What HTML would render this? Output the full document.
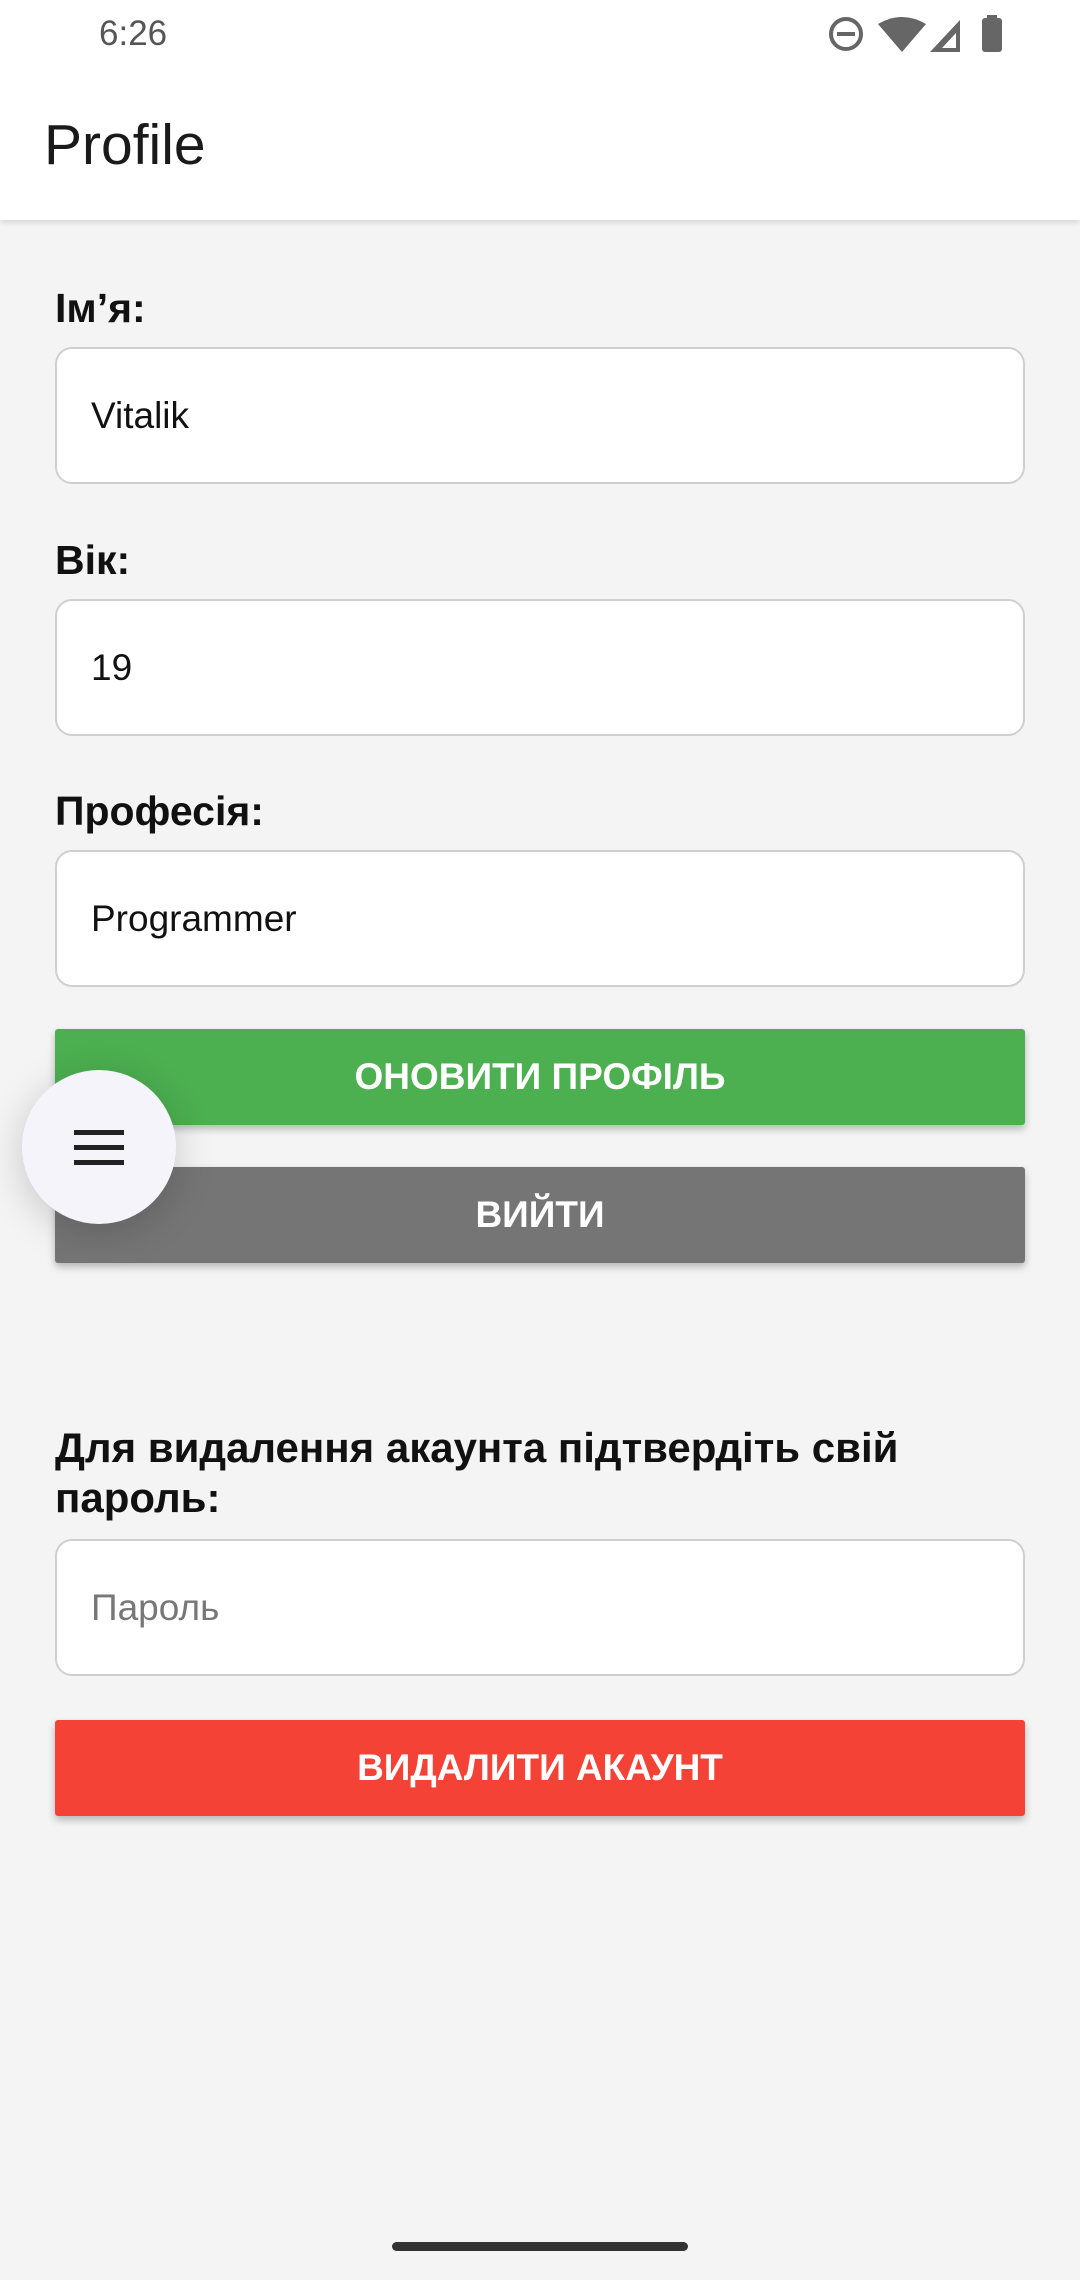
<!DOCTYPE html>
<html><head><meta charset="utf-8"><style>
*{margin:0;padding:0;box-sizing:border-box}
body{width:1080px;height:2280px;background:#f4f4f4;font-family:"Liberation Sans",sans-serif;position:relative;overflow:hidden}
.abs{position:absolute}
.status{top:0;left:0;width:1080px;height:220px;background:#fff;box-shadow:0 2px 6px rgba(0,0,0,.15)}
.lbl{left:55px;font-weight:bold;font-size:41px;color:#111}
.inp{left:55px;width:970px;height:137px;background:#fff;border:2px solid #cfcfcf;border-radius:17px;font-size:37px;color:#111;padding-left:34px;line-height:133px}
.btn{left:55px;width:970px;height:96px;border-radius:3px;color:#fff;font-weight:bold;font-size:37px;text-align:center;line-height:96px;box-shadow:0 4px 8px rgba(0,0,0,.25)}
</style></head><body>
<div class="abs status">
 <div class="abs" style="left:99px;top:14px;font-size:35px;color:#555">6:26</div>
 <svg class="abs" style="left:826px;top:14px" width="180" height="40" viewBox="0 0 180 40">
  <circle cx="20" cy="20" r="15" fill="none" stroke="#666" stroke-width="4"/><rect x="11" y="18" width="18" height="4" fill="#666"/>
  <path d="M52 10 Q76 -4 100 10 L76 38 Z" fill="#666"/>
  <path d="M104 38 L134 6 L134 38 Z" fill="#666"/><path d="M116 34 L130 19 L130 34Z" fill="#fff"/>
  <rect x="156" y="4" width="20" height="34" rx="3" fill="#666"/><rect x="161" y="1" width="10" height="5" fill="#666"/>
 </svg>
 <div class="abs" style="left:44px;top:112px;font-size:57px;color:#1a1a1a">Profile</div>
</div>
<div class="abs lbl" style="top:285px">Ім’я:</div>
<div class="abs inp" style="top:347px">Vitalik</div>
<div class="abs lbl" style="top:537px">Вік:</div>
<div class="abs inp" style="top:599px">19</div>
<div class="abs lbl" style="top:788px">Професія:</div>
<div class="abs inp" style="top:850px">Programmer</div>
<div class="abs btn" style="top:1029px;background:#4caf50">ОНОВИТИ ПРОФІЛЬ</div>
<div class="abs btn" style="top:1167px;background:#757575">ВИЙТИ</div>
<div class="abs" style="left:22px;top:1070px;width:154px;height:154px;border-radius:50%;background:#f6f4fb;box-shadow:0 8px 40px rgba(0,0,0,.18)">
 <div class="abs" style="left:52px;top:60px;width:50px;height:5px;background:#222"></div>
 <div class="abs" style="left:52px;top:75px;width:50px;height:5px;background:#222"></div>
 <div class="abs" style="left:52px;top:90px;width:50px;height:5px;background:#222"></div>
</div>
<div class="abs lbl" style="top:1423px;line-height:50px;width:920px;font-size:42px">Для видалення акаунта підтвердіть свій пароль:</div>
<div class="abs inp" style="top:1539px;color:#777">Пароль</div>
<div class="abs btn" style="top:1720px;background:#f44336">ВИДАЛИТИ АКАУНТ</div>
<div class="abs" style="left:392px;top:2242px;width:296px;height:9px;border-radius:5px;background:#333"></div>
</body></html>
